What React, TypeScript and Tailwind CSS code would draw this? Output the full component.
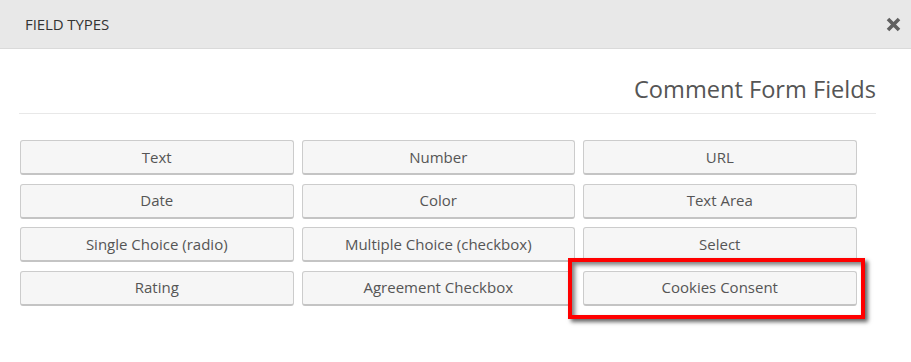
import React from "react";

const rows: string[][] = [
  ["Text", "Number", "URL"],
  ["Date", "Color", "Text Area"],
  ["Single Choice (radio)", "Multiple Choice (checkbox)", "Select"],
  ["Rating", "Agreement Checkbox", "Cookies Consent"],
];

function FieldButton({ label }: { label: string }) {
  return (
    <button className="relative z-10 w-full h-[35px] rounded-[3px] border border-[#cccccc] border-b-2 border-b-[#c4c4c4] bg-[#f6f6f6] text-[15px] text-[#555555] leading-none">
      {label}
    </button>
  );
}

export default function App() {
  return (
    <div
      className="w-[911px] h-[362px] bg-white overflow-hidden"
      style={{ fontFamily: '"Open Sans", "Noto Sans", sans-serif' }}
    >
      <div className="flex h-[49px] items-center justify-between bg-[#e8e8e8] border-b border-[#dadada] pl-[25px] pr-[10px]">
        <span className="text-[15px] text-[#333333] tracking-[-0.1px]">FIELD TYPES</span>
        <svg width="15" height="15" viewBox="0 0 15 15">
          <path d="M2 2 L13 13 M13 2 L2 13" stroke="#606060" strokeWidth="3.6" strokeLinecap="butt" />
        </svg>
      </div>
      <div className="pl-[19px] pr-[35px]">
        <div className="pt-[25px] pb-[9px] border-b border-[#e8e8e8] text-right text-[23.6px] leading-[30px] text-[#555555]">
          Comment Form Fields
        </div>
        <div className="grid grid-cols-[273.5px_273.5px_273.5px] gap-x-[8px] gap-y-[8.6px] pt-[26px] pl-[1px]">
          {rows.flat().map((label) =>
            label === "Cookies Consent" ? (
              <div key={label} className="relative">
                <span className="absolute left-[-15px] top-[-13px] right-[-8px] bottom-[-13px] z-10 bg-white border-4 border-[#ff0000] shadow-[3px_3px_4px_rgba(0,0,0,0.6),inset_3px_3px_4px_rgba(0,0,0,0.5)]" />
                <div className="relative z-20">
                  <FieldButton label={label} />
                </div>
              </div>
            ) : (
              <FieldButton key={label} label={label} />
            )
          )}
        </div>
      </div>
    </div>
  );
}
